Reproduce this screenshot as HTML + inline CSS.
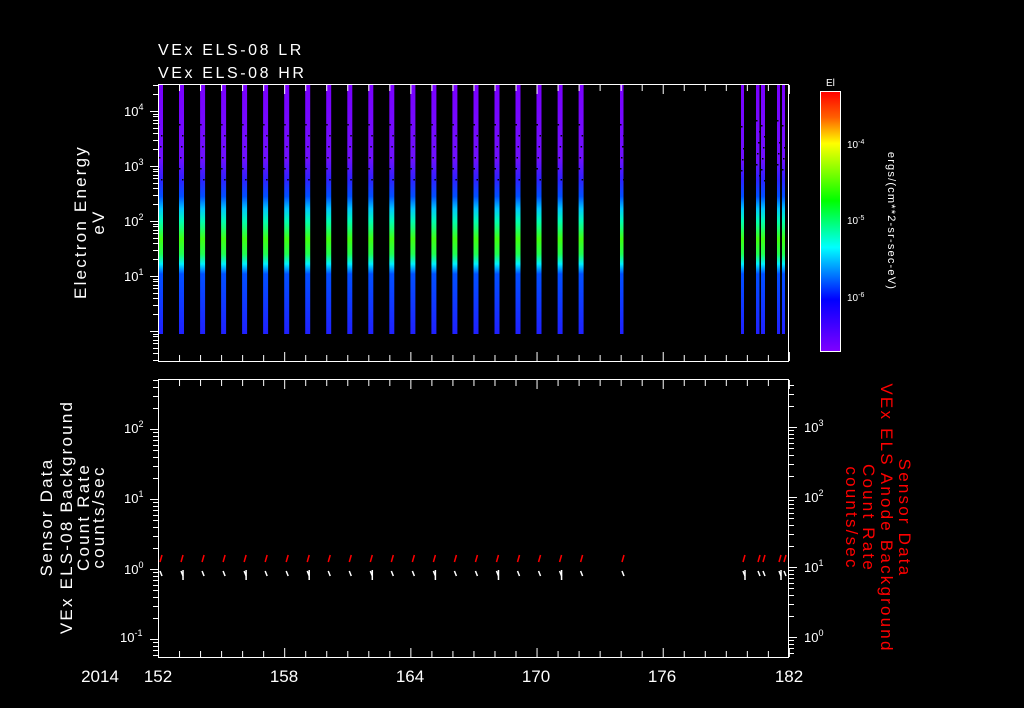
<!DOCTYPE html>
<html><head><meta charset="utf-8">
<style>
html,body{margin:0;padding:0;background:#000;width:1024px;height:708px;overflow:hidden}
svg{display:block}
text{font-family:"Liberation Sans","DejaVu Sans",sans-serif;fill:#fff}
</style></head>
<body>
<svg id="s" width="1024" height="708" viewBox="0 0 1024 708" xmlns="http://www.w3.org/2000/svg">
<defs>
<linearGradient id="bar" gradientUnits="userSpaceOnUse" x1="0" y1="84" x2="0" y2="334">
<stop offset="0" stop-color="#7a00ff"/>
<stop offset="0.30" stop-color="#7010ff"/>
<stop offset="0.38" stop-color="#3020ff"/>
<stop offset="0.45" stop-color="#0050ff"/>
<stop offset="0.50" stop-color="#00c8ff"/>
<stop offset="0.55" stop-color="#00ffb0"/>
<stop offset="0.62" stop-color="#40ff10"/>
<stop offset="0.68" stop-color="#20ff50"/>
<stop offset="0.72" stop-color="#00f0ff"/>
<stop offset="0.76" stop-color="#0050ff"/>
<stop offset="1" stop-color="#2020ff"/>
</linearGradient>
<linearGradient id="cb" x1="0" y1="0" x2="0" y2="1">
<stop offset="0" stop-color="#ff0000"/>
<stop offset="0.1" stop-color="#ff6000"/>
<stop offset="0.2" stop-color="#ffff00"/>
<stop offset="0.42" stop-color="#00ff00"/>
<stop offset="0.6" stop-color="#00ffff"/>
<stop offset="0.8" stop-color="#0000ff"/>
<stop offset="1" stop-color="#8000ff"/>
</linearGradient>
</defs>
<g id="bars"></g>
<g id="ticks" stroke="#fff" stroke-width="1" fill="none"></g>
<rect x="158.5" y="84.5" width="630" height="277" fill="none" stroke="#fff"/>
<rect x="158.5" y="379.5" width="630" height="278" fill="none" stroke="#fff"/>
<rect x="820.5" y="91.5" width="20" height="260" fill="url(#cb)" stroke="#fff"/>

<text x="158" y="55" font-size="16" letter-spacing="2.6">VEx ELS-08 LR</text>
<text x="158" y="78" font-size="16" letter-spacing="2.6">VEx ELS-08 HR</text>

<g font-size="13">
<text x="124" y="116">10<tspan font-size="9" dy="-6">4</tspan></text>
<text x="124" y="171">10<tspan font-size="9" dy="-6">3</tspan></text>
<text x="124" y="226">10<tspan font-size="9" dy="-6">2</tspan></text>
<text x="124" y="281">10<tspan font-size="9" dy="-6">1</tspan></text>
<text x="124" y="433">10<tspan font-size="9" dy="-6">2</tspan></text>
<text x="124" y="503">10<tspan font-size="9" dy="-6">1</tspan></text>
<text x="124" y="574">10<tspan font-size="9" dy="-6">0</tspan></text>
<text x="120" y="642">10<tspan font-size="9" dy="-6">-1</tspan></text>
<text x="804" y="432">10<tspan font-size="9" dy="-6">3</tspan></text>
<text x="804" y="502">10<tspan font-size="9" dy="-6">2</tspan></text>
<text x="804" y="572">10<tspan font-size="9" dy="-6">1</tspan></text>
<text x="804" y="642">10<tspan font-size="9" dy="-6">0</tspan></text>
</g>
<g font-size="10">
<text x="826" y="86">El</text>
<text x="847" y="148">10<tspan font-size="7" dy="-4">-4</tspan></text>
<text x="847" y="224">10<tspan font-size="7" dy="-4">-5</tspan></text>
<text x="847" y="301">10<tspan font-size="7" dy="-4">-6</tspan></text>
<text transform="translate(888,221) rotate(90)" text-anchor="middle" font-size="11" letter-spacing="1.2">ergs/(cm**2-sr-sec-eV)</text>
</g>

<g font-size="17" text-anchor="middle" letter-spacing="2.2">
<text transform="translate(86,222) rotate(-90)">Electron Energy</text>
<text transform="translate(104,222) rotate(-90)">eV</text>
<text transform="translate(52,517) rotate(-90)">Sensor Data</text>
<text transform="translate(72,517) rotate(-90)">VEx ELS-08 Background</text>
<text transform="translate(89,517) rotate(-90)">Count Rate</text>
<text transform="translate(104,517) rotate(-90)">counts/sec</text>
</g>
<g font-size="17" text-anchor="middle" letter-spacing="2.2">
<text transform="translate(899,518) rotate(90)" style="fill:#ff0000">Sensor Data</text>
<text transform="translate(881,518) rotate(90)" style="fill:#ff0000">VEx ELS Anode Background</text>
<text transform="translate(863,518) rotate(90)" style="fill:#ff0000">Count Rate</text>
<text transform="translate(846,518) rotate(90)" style="fill:#ff0000">counts/sec</text>
</g>

<g font-size="17" text-anchor="middle">
<text x="100" y="682">2014</text>
<text x="158" y="682">152</text>
<text x="284" y="682">158</text>
<text x="410" y="682">164</text>
<text x="536" y="682">170</text>
<text x="662" y="682">176</text>
<text x="789" y="682">182</text>
</g>
<g id="data" stroke-width="1.5" fill="none"></g>
</svg>
<script>
var NS="http://www.w3.org/2000/svg";
function el(p,t,a){var e=document.createElementNS(NS,t);for(var k in a)e.setAttribute(k,a[k]);p.appendChild(e);return e;}
var T=document.getElementById('ticks'),B=document.getElementById('bars'),D=document.getElementById('data');
function ln(x1,y1,x2,y2,c){el(T,'line',{x1:x1,y1:y1,x2:x2,y2:y2,stroke:c||'#fff'});}
for(var d=0;d<=30;d++){var x=158.5+d*21.03;var L=(d%6==0)?9:6;
 ln(x,85,x,85+L);ln(x,361,x,361-L);ln(x,380,x,380+L);ln(x,657,x,657-L);}
function logt(y0,dec,ymin,ymax,side,xa){
 for(var e=-3;e<6;e++)for(var m=1;m<10;m++){var y=Math.round(y0-dec*(e+Math.log10(m)))+0.5;
  if(y<ymin||y>ymax)continue;var L=(m==1)?8:5;
  if(side<0)ln(xa,y,xa-L,y);else ln(xa,y,xa+L,y);}}
logt(331,55,85,361,-1,158);
logt(569,70,380,657,-1,158);
logt(637,70,380,657,1,789);
var cbt=[99,113,126,144,148,152,156,161,167,175,186,220,224,228,233,238,244,252,263,297,301,305,310,315,321,329,340];
cbt.forEach(function(y){ln(840,y+0.5,836,y+0.5);});
var xs=[];for(var k=0;k<=20;k++)xs.push([158+k*21.03,5]);
xs.push([620,3.5],[741,3],[756,3.5],[761,4],[777,3],[782,3]);
xs.forEach(function(b){el(B,'rect',{x:b[0].toFixed(1),y:84,width:b[1],height:250,fill:'url(#bar)'});
 for(var i=0;i<6;i++){el(B,'rect',{x:(b[0]+((i*7)%4)).toFixed(1),y:120+i*11+((b[0]|0)%7),width:1.5,height:1.5,fill:'#000'});}
});
xs.forEach(function(b,i){var x=b[0]+2;
 el(D,'line',{x1:x,y1:562,x2:x+2,y2:555,stroke:'#ff0000'});
 el(D,'line',{x1:x,y1:571,x2:x+2,y2:576,stroke:'#fff'});
 if(i%3==1)el(D,'line',{x1:x+2,y1:570,x2:x+2,y2:580,stroke:'#fff'});
});
</script>
</body></html>
